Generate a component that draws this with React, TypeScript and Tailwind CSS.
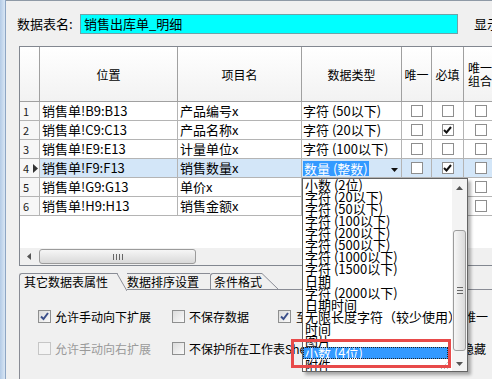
import React from "react"

type Row = {
  n: string
  pos: string
  name: string
  type: string
  req: boolean
  active?: boolean
}

const rows: Row[] = [
  { n: "1", pos: "销售单!B9:B13", name: "产品编号x", type: "字符 (50以下)", req: false },
  { n: "2", pos: "销售单!C9:C13", name: "产品名称x", type: "字符 (20以下)", req: true },
  { n: "3", pos: "销售单!E9:E13", name: "计量单位x", type: "字符 (100以下)", req: false },
  { n: "4", pos: "销售单!F9:F13", name: "销售数量x", type: "", req: true, active: true },
  { n: "5", pos: "销售单!G9:G13", name: "单价x", type: "", req: false },
  { n: "6", pos: "销售单!H9:H13", name: "销售金额x", type: "", req: false },
]

const items = [
  "小数 (2位)",
  "字符 (20以下)",
  "字符 (50以下)",
  "字符 (100以下)",
  "字符 (200以下)",
  "字符 (500以下)",
  "字符 (1000以下)",
  "字符 (1500以下)",
  "日期",
  "字符 (2000以下)",
  "日期时间",
  "无限长度字符（较少使用）",
  "时间",
  "图片",
  "小数 (4位)",
  "附件",
]

function GridBox({ checked }: { checked?: boolean }) {
  return (
    <span className="w-[12px] h-[12px] border border-[#8e8e8e] bg-white flex items-center justify-center">
      {checked && (
        <svg width="9" height="8" viewBox="0 0 9 8">
          <path d="M1 4 L3.5 6.5 L8 1" fill="none" stroke="#111" strokeWidth="2" />
        </svg>
      )}
    </span>
  )
}

function PanelBox({ checked, disabled }: { checked?: boolean; disabled?: boolean }) {
  return (
    <span
      className={
        "w-[13px] h-[13px] shrink-0 border flex items-center justify-center " +
        (disabled
          ? "border-[#c6c6c6] bg-[#f4f4f4]"
          : "border-[#8e8f8f] bg-gradient-to-br from-[#dcdcdc] to-[#fafafa]")
      }
    >
      {checked && (
        <svg width="9" height="9" viewBox="0 0 9 9">
          <path d="M1 4.5 L3.5 7 L8 1" fill="none" stroke="#3b4f8a" strokeWidth="2" />
        </svg>
      )}
    </span>
  )
}

function HeadCell({ className, children }: { className: string; children?: React.ReactNode }) {
  return (
    <div
      className={
        "shrink-0 h-full border-r border-[#a0a0a0] bg-gradient-to-b from-white to-[#f2f2f2] flex items-center justify-center text-[12px] leading-[13px] text-center " +
        className
      }
    >
      {children}
    </div>
  )
}

export default function App() {
  return (
    <div className="relative w-[492px] h-[379px] overflow-hidden flex bg-[#f0f0f0] font-['Noto_Sans_CJK_SC',sans-serif] text-black">
      <div className="w-[6px] shrink-0 bg-gradient-to-r from-[#b4cbe6] to-[#d9e6f4] border-r border-[#8ea6c4]" />

      <div className="flex-1 min-w-0 flex flex-col border-t border-[#8f9aa6] pl-[13px]">
        {/* table name */}
        <div className="flex items-center mt-[13px] h-[20px] shrink-0">
          <span className="-ml-[2px] w-[63px] shrink-0 text-[13px]">数据表名:</span>
          <div className="w-[378px] h-[20px] shrink-0 bg-[#00ffff] border border-[#6fa3a8] flex items-center pl-[3px] text-[13px]">
            销售出库单_明细
          </div>
          <span className="ml-[16px] shrink-0 text-[13px] whitespace-nowrap">显示</span>
        </div>

        {/* grid */}
        <div className="mt-[12px] w-[500px] shrink-0 flex flex-col border-l border-t border-b border-[#828790] bg-white">
          <div className="flex h-[55px] border-b border-[#a0a0a0]">
            <HeadCell className="w-[20px]" />
            <HeadCell className="w-[138px]">位置</HeadCell>
            <HeadCell className="w-[124px]">项目名</HeadCell>
            <HeadCell className="w-[100px]">数据类型</HeadCell>
            <HeadCell className="w-[30px]">唯一</HeadCell>
            <HeadCell className="w-[32px]">必填</HeadCell>
            <HeadCell className="w-[60px] !justify-start pl-[4px] text-left">
              唯一
              <br />
              组合
            </HeadCell>
          </div>

          {rows.map((r) => {
            const bg = r.active ? "bg-[#d3e6f8]" : "bg-white"
            return (
              <div key={r.n} className="flex h-[19px] border-b border-[#b4b4b4] text-[13px] leading-[18px]">
                <div className="w-[20px] shrink-0 border-r border-[#b4b4b4] bg-[#f7f7f7] flex items-center pl-[3px] text-[11px] text-[#222]">
                  {r.n}
                  {r.active && (
                    <svg width="5" height="9" viewBox="0 0 5 9" className="ml-[4px]">
                      <path d="M0 0 L5 4.5 L0 9 Z" fill="#333" />
                    </svg>
                  )}
                </div>
                <div className={"w-[138px] shrink-0 border-r border-[#b4b4b4] pl-[2px] whitespace-nowrap overflow-hidden " + bg}>
                  {r.pos}
                </div>
                <div className={"w-[124px] shrink-0 border-r border-[#b4b4b4] pl-[2px] whitespace-nowrap overflow-hidden " + bg}>
                  {r.name}
                </div>
                <div className={"w-[100px] shrink-0 border-r border-[#b4b4b4] pl-[1px] whitespace-nowrap overflow-hidden flex items-center " + bg}>
                  {r.active ? (
                    <>
                      <span className="bg-[#3399ff] text-white leading-[15px] px-[1px]">数量 (整数)</span>
                      <svg width="7" height="4" viewBox="0 0 7 4" className="ml-auto mr-[3px] mt-[4px]">
                        <path d="M0 0 H7 L3.5 4 Z" fill="#111" />
                      </svg>
                    </>
                  ) : (
                    r.type
                  )}
                </div>
                <div className={"w-[30px] shrink-0 border-r border-[#b4b4b4] flex items-center justify-center " + bg}>
                  <GridBox />
                </div>
                <div className={"w-[32px] shrink-0 border-r border-[#b4b4b4] flex items-center justify-center " + bg}>
                  <GridBox checked={r.req} />
                </div>
                <div className={"w-[60px] shrink-0 flex items-center pl-[11px] " + bg}>
                  <GridBox />
                </div>
              </div>
            )
          })}

          <div className="h-[32px]" />

          {/* horizontal scrollbar */}
          <div className="h-[17px] flex items-center bg-[#f0f0f0]">
            <div className="w-[17px] h-full flex items-center justify-center">
              <svg width="4" height="7" viewBox="0 0 4 7">
                <path d="M4 0 L0 3.5 L4 7 Z" fill="#555" />
              </svg>
            </div>
            <div className="ml-[2px] w-[157px] h-[15px] rounded-[3px] border border-[#9b9b9b] bg-gradient-to-b from-[#f6f6f6] to-[#d9d9d9] flex items-center justify-center gap-[2px]">
              <span className="w-px h-[6px] bg-[#666]" />
              <span className="w-px h-[6px] bg-[#666]" />
              <span className="w-px h-[6px] bg-[#666]" />
              <span className="w-px h-[6px] bg-[#666]" />
            </div>
          </div>
        </div>

        {/* tabs */}
        <div className="mt-[7px] h-[17px] shrink-0 flex items-end text-[12px]">
          <div className="relative z-10 -mb-px flex h-[18px]">
            <div className="w-[99px] h-full border-l border-t border-[#898c95] rounded-tl-[3px] bg-[#f0f0f0] pl-[4px] leading-[16px] whitespace-nowrap">
              其它数据表属性
            </div>
            <svg width="10" height="18" viewBox="0 0 10 18" className="-ml-px">
              <path d="M0 0 L0 18 L10 18 Z" fill="#f0f0f0" />
              <path d="M0 0.5 L10 18" stroke="#898c95" strokeWidth="1" fill="none" />
            </svg>
          </div>
          <div className="w-[83px] h-[17px] border-t border-b border-[#898c95] leading-[15px] whitespace-nowrap">
            数据排序设置
          </div>
          <div className="h-[17px] flex">
            <div className="w-[52px] h-full border-l border-t border-b border-[#898c95] rounded-tl-[3px] pl-[3px] leading-[15px] whitespace-nowrap">
              条件格式
            </div>
            <svg width="17" height="17" viewBox="0 0 17 17">
              <path d="M0 0.5 L17 17" stroke="#898c95" strokeWidth="1" fill="none" />
              <path d="M0 16.5 H17" stroke="#898c95" strokeWidth="1" />
            </svg>
          </div>
          <div className="flex-1 h-[17px] border-b border-[#898c95]" />
        </div>

        {/* tab panel */}
        <div className="flex-1 border-l border-[#898c95] flex flex-col pl-[18px] pt-[20px] gap-[19px] text-[12px] leading-[13px]">
          <div className="flex items-center h-[13px] whitespace-nowrap">
            <div className="w-[134px] flex items-center gap-[4px]">
              <PanelBox checked />
              <span>允许手动向下扩展</span>
            </div>
            <div className="w-[106px] flex items-center gap-[4px]">
              <PanelBox />
              <span>不保存数据</span>
            </div>
            <div className="flex items-center gap-[5px]">
              <PanelBox checked />
              <span>至少设置一个字段为必填项或者唯一</span>
            </div>
          </div>
          <div className="flex items-center h-[13px] whitespace-nowrap">
            <div className="w-[134px] flex items-center gap-[4px] text-[#9a9a9a]">
              <PanelBox disabled />
              <span>允许手动向右扩展</span>
            </div>
            <div className="flex-1 flex items-center gap-[4px] pr-[6px]">
              <PanelBox />
              <span>不保护所在工作表Sheet</span>
              <span className="ml-auto">隐藏</span>
            </div>
          </div>
        </div>
      </div>

      {/* dropdown list */}
      <div className="absolute left-[302px] top-[178px] w-[166px] h-[194px] bg-white border border-[#646464] shadow-[3px_3px_3px_rgba(0,0,0,0.3)] flex">
        <div className="flex-1 min-w-0 overflow-hidden pr-[4px]">
          {items.map((t, i) => (
            <div
              key={t}
              className={
                "h-[12px] pl-[2px] text-[13px] leading-[12px] whitespace-nowrap " +
                (i === 14 ? "bg-[#3399ff] text-white outline-1 outline-dotted outline-[#222] -outline-offset-1" : "")
              }
            >
              {t}
            </div>
          ))}
        </div>
        <div className="w-[15px] shrink-0 flex flex-col bg-[#f3f3f3]">
          <div className="h-[17px] flex items-center justify-center">
            <svg width="7" height="4" viewBox="0 0 7 4">
              <path d="M0 4 L3.5 0 L7 4 Z" fill="#555" />
            </svg>
          </div>
          <div className="h-[34px]" />
          <div className="h-[121px] mx-px rounded-[3px] border border-[#9c9c9c] bg-gradient-to-r from-[#f7f7f7] to-[#dadada] flex flex-col items-center justify-center gap-[2px]">
            <span className="w-[6px] h-px bg-[#666]" />
            <span className="w-[6px] h-px bg-[#666]" />
            <span className="w-[6px] h-px bg-[#666]" />
          </div>
          <div className="h-[5px]" />
          <div className="h-[15px] flex items-center justify-center">
            <svg width="7" height="4" viewBox="0 0 7 4">
              <path d="M0 0 H7 L3.5 4 Z" fill="#555" />
            </svg>
          </div>
        </div>
      </div>

      {/* resize grip */}
      <svg width="12" height="12" viewBox="0 0 12 12" className="absolute left-[438px] top-[358px]">
        <path d="M11 3 L3 11 M11 6 L6 11 M11 9 L9 11" stroke="#9a9a9a" strokeWidth="1" strokeDasharray="1 1" />
      </svg>

      {/* annotation */}
      <div className="absolute left-[291px] top-[339px] w-[160px] h-[29px] border-[3px] border-[#e84a4a]" />
    </div>
  )
}
